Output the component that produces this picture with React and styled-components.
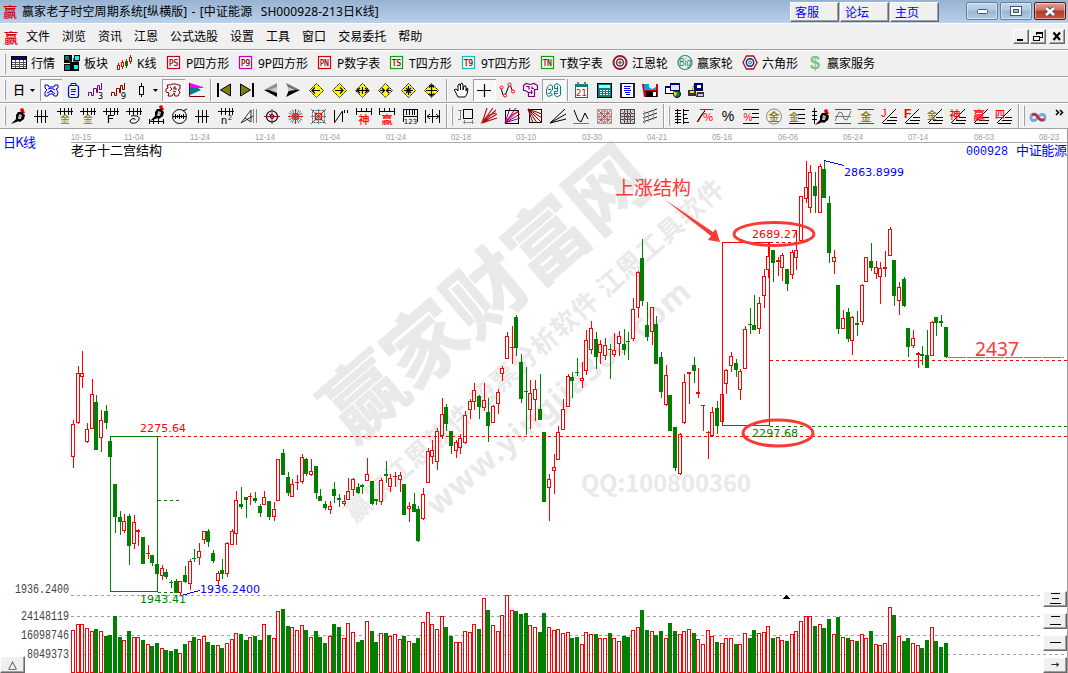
import React from 'react';
import styled, { createGlobalStyle, css } from 'styled-components';

const cjk = '"Noto Sans", "Noto Sans CJK SC", sans-serif';
const OLIVE = '#808000';
const TEAL = '#008080';
const MAROON = '#800000';
const PURPLE = '#800080';

const GlobalStyle = createGlobalStyle`
    * {
        box-sizing: border-box;
    }
    body {
        margin: 0;
        overflow: hidden;
        background: #f0f0f0;
        font-family: ${cjk};
        font-size: 12px;
        color: #000;
    }
`;

const raised = css`
    background: #f0f0f0;
    border: 1px solid;
    border-color: #fff #696969 #696969 #fff;
    box-shadow: inset -1px -1px 0 #a0a0a0;
`;

const Window = styled.div`
    display: flex;
    flex-direction: column;
    width: 1068px;
    height: 673px;
`;

const TitleBar = styled.header`
    display: flex;
    align-items: flex-start;
    height: 23px;
    padding: 0 2px 0 3px;
    background: linear-gradient(#98b3d2, #b9d1ea);
    & > h1 {
        flex: 1;
        margin: 0 0 0 5px;
        font-size: 12px;
        line-height: 23px;
        font-weight: 400;
        letter-spacing: .1px;
        word-spacing: 1px;
        white-space: pre;
    }
`;

const AppMark = styled.span`
    width: 14px;
    line-height: ${(p) => p.$line || 23}px;
    font-family: "Noto Sans CJK SC", sans-serif;
    font-size: 14px;
    font-weight: 500;
    color: #d00010;
`;

const LinkButtons = styled.div`
    display: flex;
    gap: 1px;
    padding-top: 2px;
    margin-right: 27px;
    & > button {
        ${raised}
        width: 49px;
        height: 20px;
        padding: 0 0 0 4px;
        text-align: left;
        font-family: "Noto Sans CJK SC", sans-serif;
        font-size: 12px;
        line-height: 16px;
        color: #00f;
    }
`;

const WindowButtons = styled.div`
    display: flex;
    gap: 2px;
    padding-top: 2px;
`;

const WindowButton = styled.button`
    display: flex;
    align-items: center;
    justify-content: center;
    width: 32px;
    height: 18px;
    padding: 0;
    border: 1px solid ${(p) => (p.$close ? '#4e1c1c' : '#62809f')};
    border-radius: 2px;
    background: ${(p) => (p.$close
        ? 'linear-gradient(#e0a497, #cf7262 45%, #b8371f 50%, #c9583f)'
        : 'linear-gradient(#c1d5ea, #b2c9e2 45%, #9ab6d3 50%, #b1cae5)')};
    box-shadow: inset 0 0 0 1px rgba(255, 255, 255, .45);
`;

const MenuBar = styled.nav`
    display: flex;
    align-items: center;
    height: 27px;
    padding: 0 3px 0 4px;
    border-top: 1px solid #fff;
    border-bottom: 1px solid #a0a0a0;
    & > ul {
        display: flex;
        flex: 1;
        gap: 12px;
        margin: 0;
        padding: 0 0 0 8px;
        list-style: none;
        line-height: 15px;
    }
`;

const MdiButtons = styled.div`
    display: flex;
    gap: 1px;
    & > button {
        ${raised}
        width: 16px;
        height: 15px;
        padding: 0;
        line-height: 0;
    }
    & > button:last-child {
        margin-left: 2px;
    }
`;

const Toolbar = styled.div`
    display: flex;
    align-items: center;
    flex: none;
    height: ${(p) => p.$height || 26}px;
    padding-left: 4px;
    border-top: 1px solid #fff;
    border-bottom: 1px solid #a0a0a0;
`;

const Grip = styled.i`
    flex: none;
    width: 2px;
    height: 20px;
    margin-right: ${(p) => p.$after}px;
    border-left: 1px solid #fff;
    border-right: 1px solid #a0a0a0;
`;

const Divider = styled.i`
    flex: none;
    width: 2px;
    height: ${(p) => (p.$full ? 24 : 22)}px;
    margin: 0 ${(p) => p.$after}px 0 ${(p) => p.$before}px;
    border-left: 1px solid #a0a0a0;
    border-right: 1px solid #fff;
`;

const LabelTool = styled.div`
    display: flex;
    align-items: center;
    flex: none;
    gap: 3px;
    width: ${(p) => p.$width}px;
    white-space: nowrap;
    line-height: 17px;
`;

const Tool = styled.div`
    display: flex;
    align-items: flex-start;
    flex: none;
    width: ${(p) => p.$width || 23}px;
    height: 22px;
    padding-top: 3px;
    padding-left: ${(p) => (p.$tight ? 0 : 3)}px;
    ${(p) => p.$pressed && css`
        background: #f8f8f8;
        box-shadow: inset 1px 1px 0 #a0a0a0, inset -1px -1px 0 #fff;
    `}
`;

const Icon = styled.svg`
    display: block;
    flex: none;
    width: 17px;
    height: 17px;
    overflow: visible;
`;

const ChartArea = styled.main`
    position: relative;
    flex: none;
    height: 544px;
    background: #fff;
    border-right: 1px solid #a0a0a0;
    & > svg {
        display: block;
        overflow: visible;
    }
`;

const CornerButton = styled.button`
    ${raised}
    position: absolute;
    left: 0;
    bottom: 0;
    width: 25px;
    height: 17px;
    padding: 0;
    font-family: "DejaVu Sans", sans-serif;
    font-size: 11px;
    line-height: 12px;
`;

const PaneButtons = styled.div`
    position: absolute;
    right: 0;
    bottom: 0;
    display: flex;
    flex-direction: column;
    gap: 6px;
    & > button {
        ${raised}
        width: 24px;
        height: 16px;
        padding: 0;
        font-family: "DejaVu Sans", sans-serif;
        font-size: 10px;
        line-height: 0;
    }
`;

// stroke helper for the small toolbar drawings
const S = ({ d, c = '#000', w = 1, f = 'none' }) => <path d={d} stroke={c} strokeWidth={w} fill={f} />;
const F = ({ d, c = '#000' }) => <path d={d} fill={c} />;
const T = ({ x = 8, y = 15, s = 10, c = '#000', b = 400, m = 'middle', children }) => (
    <text x={x} y={y} fontSize={s} fill={c} fontWeight={b} textAnchor={m} fontFamily='"Noto Sans CJK SC", sans-serif'>{children}</text>
);

const comb = 'M0 3.500H16M3.500 0V7M7.500 0V7M11.500 0V7M14.500 0V7';
const fan = 'M1 15L12 0M1 15L15 2M1 15L16 6M1 15L16 10M1 15L6 0';
const slant = 'M1 15L15 1M9 9.500H16M6 12.500H16M2 15.500H15';

const Pen = ({ x = 0, y = 0 }) => (
    <g transform={`translate(${x} ${y})`}>
        <F d="M9 1L12 0L14 5L10 5Z" c="#e00000" />
        <F d="M7 4L11 4L14 7L13 11L9 14L5 12L5 7Z" />
        <F d="M8 6L11 7L10 11L7 11Z" c="#b8b8b8" />
        <F d="M5 11L8 13L0 16Z" />
    </g>
);

const Diamond = ({ arrow }) => (
    <>
        <path d="M8.500 1.500L15.500 8.500L8.500 15.500L1.500 8.500Z" fill="#ff0" stroke="#000" strokeDasharray="1.500 .6" />
        <S d={arrow} w="1.200" />
    </>
);

const Plate = ({ text, border }) => (
    <>
        <rect x="1.500" y="1.500" width="12" height="12" fill="#fff8f8" stroke={border} strokeWidth="1.200" />
        <text x="7.500" y="11" fontSize="8" textLength="9" lengthAdjust="spacingAndGlyphs" fontFamily="DejaVu Sans, sans-serif" textAnchor="middle" fill={MAROON} stroke={MAROON} strokeWidth=".25">{text}</text>
    </>
);

const Grid = ({ c, r }) => (
    <>
        <S d="M1.500 1.500H15.500V15.500H1.500ZM1 5.500H16M1 8.500H16M1 11.500H16M5.500 1V16M8.500 1V16M11.500 1V16" c={c} />
        <S d="M2 2L15 15M15 2L2 15M8.500 2L2 8.500L8.500 15L15 8.500Z" c={r} />
    </>
);

const icons = {
    quote: <><rect x=".5" y="1.500" width="15" height="12" fill="#fff" stroke="#000" /><F d="M1 2H15V5H1Z" c="#000080" /><S d="M1 7.500H15M1 9.500H15M1 11.500H15M4.500 5V13M8.500 5V13M12.500 5V13" c="#555" /></>,
    blocks: (
        <>
            <F d="M0 0H8V8H0ZM6 7H15V16H6Z" />
            <F d="M1 1H5V5H1ZM2 10H7V15H2ZM9 3H15V7H9Z" c={TEAL} />
            <rect x="10.500" y=".5" width="5" height="5" fill="#00ffff" stroke="#000" />
            <rect x=".5" y="9.500" width="6" height="6" fill={TEAL} stroke="#000" />
            <rect x="9.500" y="9.500" width="5" height="5" fill="#00ffff" stroke="#000" />
            <S d="M2 2L7 7M5 2L2 5" c={TEAL} />
        </>
    ),
    kline: <><S d="M1.500 8V15M5.500 5V14M13.500 0V9" c="red" /><S d="M9.500 4V13" c="green" /><rect x=".5" y="10.500" width="2" height="4" fill="#fff" stroke="red" /><rect x="4.500" y="7.500" width="2" height="4" fill="#fff" stroke="red" /><rect x="8.500" y="6.500" width="2" height="4" fill="green" stroke="green" /><rect x="12.500" y="2.500" width="2" height="4" fill="#fff" stroke="red" /></>,
    ps: <Plate text="PS" border="#c00020" />,
    p9: <Plate text="P9" border="#c000c0" />,
    pn: <Plate text="PN" border="#d00000" />,
    ts: <Plate text="TS" border="#00a800" />,
    t9: <Plate text="T9" border="#00c0c0" />,
    tn: <Plate text="TN" border="#00a800" />,
    target: <><circle cx="8" cy="7.500" r="6.500" fill="#fff" stroke="#8c1c34" strokeWidth="2" /><circle cx="8" cy="7.500" r="3.500" fill="none" stroke="#7c2638" strokeWidth="1.500" /><circle cx="8" cy="7.500" r="1.500" fill="#2a9a50" /><S d="M8 3V12M3.500 7.500H12.500" c="#6a6a6a" w=".6" /></>,
    big: <><circle cx="8" cy="7.500" r="7" fill="#e4f3f0" stroke="#477792" strokeWidth="1.200" /><text x="8" y="11" fontSize="10" textAnchor="middle" textLength="12" lengthAdjust="spacingAndGlyphs" fill="#198045" fontFamily="Liberation Sans">Big</text></>,
    hex: <><S d="M1 7.500L4.500 1H11.500L15 7.500L11.500 14H4.500Z" c="#b01020" w="1.400" f="#fff" /><circle cx="8" cy="7.500" r="3.700" fill="none" stroke="#1620a0" strokeWidth="1.500" /><circle cx="8" cy="7.500" r="1.500" fill="none" stroke="#15803a" /></>,
    dollar: <text x="8" y="14" fontSize="18" fontWeight="700" textAnchor="middle" fill="#7cc384" fontFamily="Liberation Sans">$</text>,

    day: <T x={11} y={13} s={12} b={500}>日</T>,
    caret: <F d="M0 7H5L2.500 10Z" />,
    storm: <><S d="M2 3H5L6 5H11L12 3H15V6L13 7L15 10L14 14H11L10 12H6L5 14H2V10L4 8L2 6Z" c="#0000e0" /><S d="M5 7L8 6L12 8M4 11L8 9L12 12M7 8L10 10" c="#0000e0" /></>,
    clip: <><rect x="3.500" y="3.500" width="10" height="12" rx="2" fill="none" stroke="#00f" strokeWidth="1.200" /><S d="M6 3.500V1.500H11V3.500M6 7.500H11M6 9.500H11M6 12.500H10" c="#00f" /></>,
    wave3: <><S d="M.5 14V10.500H3.500V13.500H5.500V6.500H8.500V10.500H9.500V3.500H11.500V7.500H13.500V1" c={PURPLE} /><text x="12.500" y="16.500" fontSize="8.500" textAnchor="middle" fontFamily="DejaVu Sans">3</text></>,
    wave9: <><S d="M.5 14V10.500H3.500V13.500H5.500V6.500H8.500V10.500H9.500V3.500H11.500V7.500H13.500V1" c={MAROON} /><text x="12.500" y="16.500" fontSize="8.500" textAnchor="middle" fontFamily="DejaVu Sans">9</text></>,
    candle: <><S d="M7.500 1V15" /><rect x="5.500" y="4.500" width="4" height="8" fill="#f0f0f0" stroke="#000" /></>,
    puzzle: <><S d="M2 3H5L7 2H11L13 3H15V7L13 8L15 10L13 14H10L9 11L7 14H3L4 11L1 10V7L3 6Z" c={MAROON} /><S d="M5 5L7 7L5 9M10 4V7H12M8 9L11 10M9 5V8" c={MAROON} /></>,
    flag: <><S d="M1.500 1V14.500H17" c={MAROON} /><F d="M2 1L15 5V6H2Z" c="#f0f" /><F d="M2 6H10L13 8L2 13Z" c={TEAL} /></>,
    first: <><F d="M1 1H3V15H1Z" /><S d="M14.500 2V14L4.500 8Z" f={OLIVE} /></>,
    last: <><F d="M13 1H15V15H13Z" /><S d="M1.500 2V14L11.500 8Z" f={OLIVE} /></>,
    prev: <><F d="M2 8L15 1V8Z" c="#909090" /><F d="M2 8H15V15Z" /><F d="M7 8L15 5V11Z" c="#c8c8c8" /></>,
    next: <><F d="M15 8L1 1L4 8Z" c="#707070" /><F d="M15 8L1 15L4 8Z" /><F d="M3 5L10 8L4 9Z" c="#c8c8c8" /></>,
    dLeft: <Diamond arrow="M4 8.500H12M7 5.500L4 8.500L7 11.500" />,
    dRight: <Diamond arrow="M4 8.500H12M9 5.500L12 8.500L9 11.500" />,
    dOut: <Diamond arrow="M3 8.500H14M6 6L3 8.500L6 11M11 6L14 8.500L11 11M8.500 5V12" />,
    dIn: <Diamond arrow="M3 8.500H7M5 6L7.500 8.500L5 11M14 8.500H9M12 6L9.500 8.500L12 11" />,
    dAll: <Diamond arrow="M4 8.500H13M8.500 4V13M6 6L11 11M11 6L6 11" />,
    dUp: <Diamond arrow="M3 8.500H14M8.500 3V14M6 5.500L8.500 3L11 5.500M6 11.500L8.500 14L11 11.500" />,
    hand: <><S d="M5 15L2 9L1 8L3 7L5 9V3L6.500 2L7.500 4V8V2L9 1L10 3V8L11 4L13 4V9L14 6L15 7L14 12L12 15Z" f="#fff" /></>,
    cross: <S d="M1 8.500H15M8.500 2V15" w="1.200" />,
    dots: <><S d="M2 6L4 13L6 14L9 6L11 2L13 8L15 11" /><circle cx="2.500" cy="5.500" r="1.500" fill="#fff" stroke="red" /><circle cx="6" cy="13.500" r="1.500" fill="#fff" stroke="red" /><circle cx="10.500" cy="2.500" r="1.500" fill="#fff" stroke="red" /><circle cx="14" cy="9.500" r="1.500" fill="#fff" stroke="red" /></>,
    brain: <S d="M1.500 3.500L4 1.500L8 2.500L12 1.500L15.500 3.500V7.500H12.500V14.500H6.500V10.500L3 8.500H1.500ZM4 4.500H7V7.500M10 4.500V6.500H12M7 10.500H10.500M9.500 8V12" c={PURPLE} w="1.200" />,
    brain2: <><S d="M2.500 5L5 2.500L7.500 4V8L5 10L7.500 13L3 14.500L1.500 12V8ZM9.500 3L12 1.500L15.500 4V13L12 15L9.500 13V9.500H12.500V6.500H9.500ZM3 7.500H6M10 11.500H13M3 11.500H5M12.500 4V7" c={TEAL} /></>,
    calendar: <><rect x="2.500" y="2.500" width="12" height="13" fill="#fff" stroke="#555" /><F d="M2 2H15V5H2Z" c={TEAL} /><F d="M4 0H6V3H4ZM11 0H13V3H11Z" c="#777" /><text x="8.500" y="13.500" fontSize="8.500" textAnchor="middle" fill="#e00000" fontFamily="DejaVu Sans">21</text></>,
    calc: <><rect x="1.500" y="1.500" width="14" height="14" fill={TEAL} stroke="#000" /><F d="M3 3H14V6H3Z" c="#9ff" /><S d="M4 8.500H14M4 10.500H14M4 12.500H14" c="#fff" /><S d="M6.500 7V14M9.500 7V14M12.500 7V14" c={TEAL} /></>,
    notes: <><rect x="1.500" y="1.500" width="14" height="14" fill="#fff" stroke="#000" /><F d="M14 2H16V16H14ZM1 1H3V16H1Z" c="#223" /><S d="M5 4.500H12M5 6.500H11M5 8.500H12M6 10.500H11M7 12.500H11" c="#00f" /></>,
    floppy: <><F d="M0 2H16V15H2Z" c="#d00000" /><F d="M2 2H14V8H2Z" c="#00a0f0" /><F d="M7 2H14V5L10 7L7 5Z" c="#f0f0f0" /><F d="M4 9H15V15H4Z" /><F d="M11 10H14V14H11Z" c="#fff" /></>,
    screens: <><rect x=".5" y="4.500" width="8" height="7" fill="#fff" stroke="#000" /><rect x="5.500" y="1.500" width="9" height="7" fill="#d8e8ff" stroke="#000080" /><F d="M5 1H15V3H5ZM0 4H5V6H0Z" c="#000080" /><circle cx="12" cy="12" r="3.500" fill="#008070" stroke="#000" /><F d="M8 9L12 11L10 15Z" c="#ffe000" /></>,
    network: <><rect x="6.500" y="1.500" width="8" height="7" fill="#000080" stroke="#000" /><F d="M9 3H13V6H9Z" c="#fff" /><F d="M0 8H8V14H0ZM9 10H16V15H8Z" c="#333" /><F d="M2 9H6V11H2Z" c="#ffe000" /><F d="M10 12H15V14H10Z" c="#ccc" /><S d="M4 8L6 3" c="#888" /></>,

    pen: <Pen />,
    hatch: <S d="M0 8.500H14M3.500 2V15M7.500 2V15M11.500 2V15" />,
    gold1: <><S d={comb} /><T y={15} c={OLIVE}>金</T></>,
    letF: <><S d={comb} /><S d="M5.500 15V7.500H11M5 10.500H10" w="1.200" /></>,
    spiral: <><S d={comb} /><S d="M5 8C12 7 15 9 12 13C10 16 4 16 4 13C5 10 10 10 9 12" /></>,
    penScale: <><Pen x={1} y={-3} /><S d="M0 13.500H15M.5 11V16M4.500 11V16M9.500 11V16M14.500 11V16" /></>,
    ruler: <><circle cx="7.500" cy="8.500" r="7" fill="none" stroke="#000" /><S d="M1 8.500H14M3.500 6V11M5.500 7V10M7.500 6V11M9.500 7V10M11.500 6V11M11 3L15 1" /></>,
    n2: <><S d={comb} /><text x="3" y="16" fontSize="11" fontFamily="Liberation Sans">n</text><text x="10" y="12" fontSize="7" fontFamily="Liberation Sans">2</text></>,
    kite: <><S d="M0 15L10 2V14L4 10M12 8L0 15" w=".8" /><S d="M12.500 1V15M15.500 1V15" c="#888" /></>,
    circleCross: <><circle cx="8" cy="8.500" r="5.500" fill="none" stroke="#000" strokeWidth="1.200" /><S d="M0 8.500H16M8 1V16" c="#802020" /><S d="M5 6L8 8.500H11" c="red" /><circle cx="8" cy="8.500" r="2" fill="none" stroke="#300" /></>,
    web: <><circle cx="8.500" cy="8.500" r="6" fill="none" stroke="#999" strokeDasharray="2 1" /><S d="M1 8.500H16M8.500 1V16" c="red" /><S d="M3 3L14 14M14 3L3 14M5 1.500L12 15.500M12 1.500L5 15.500M1.500 5L15.500 12M1.500 12L15.500 5" c={TEAL} w=".6" /><circle cx="8.500" cy="8.500" r="3" fill="none" stroke="#e03030" strokeWidth="1.500" /></>,
    squareWeb: <><rect x="2.500" y="2.500" width="12" height="12" fill="none" stroke={TEAL} strokeDasharray="2 1" /><rect x="5.500" y="5.500" width="6" height="6" fill="none" stroke="red" strokeWidth="1.400" /><S d="M1 8.500H16M8.500 1V16" c="#777" /><S d="M1 1L16 16M16 1L1 16" c="red" w=".8" /></>,
    nn: <S d="M1.500 2V15M2 14L9.500 3V14M11.500 2V5M14.500 2V5" />,
    shen: <><S d="M0 3.500H16M.5 0V7M5.500 0V4M10.500 0V4M15.500 0V7" /><T y={16} c="red" s={11} b={500}>神</T></>,
    ying: <><S d="M0 3.500H16M.5 0V7M5.500 0V4M10.500 0V4M15.500 0V7" /><T y={16} c="red" s={11} b={500}>赢</T></>,
    ruler123: <><S d="M1.500 1V14M1 1.500H15M15.500 1V14M4.500 2V7M7.500 2V7M10.500 2V7M12.500 2V7M2 8.500H15" /><text x="8.500" y="16" fontSize="7" textAnchor="middle" fontFamily="DejaVu Sans">123</text></>,
    span: <S d="M.5 2V15M7.500 1V15M14.500 2V15M2 8.500H14M5 6L2 8.500L5 11M11 6L14 8.500L11 11" />,

    frame: <><S d="M0 2.500H4M0 11.500H3M2.500 2V12M5 14.500H16M6.500 12V16M14.500 12V16" c="#888" /><rect x="5.500" y="1.500" width="9" height="9" fill="none" stroke="#000" /></>,
    fanRed: <><S d={fan} c="#a01010" w="1.100" /><S d="M0 15.500L6 8L15 5" c="red" /></>,
    fanBox: <><rect x="1.500" y="2.500" width="13" height="13" fill="none" stroke="#000" /><S d={fan} c={PURPLE} /><S d="M1 15L9 6L15 4" c="red" /></>,
    fanDown: <><rect x="2.500" y="1.500" width="12" height="13" fill="none" stroke="#000" /><S d="M1 1L15 15M1 1L15 10M1 1L10 15M1 1L15 6M1 1L6 15" c={MAROON} /></>,
    fanBlack: <S d="M0 15L15 1M0 15L16 6M0 15L16 11" />,
    vee: <><S d="M1 2L5 12L8 14L12 5L15 11" /><S d="M0 15.500H16" c="#777" w="1" /></>,
    gridRed: <Grid c="#999" r="#e04040" />,
    gridGray: <Grid c="#444" r="#a08080" />,
    channels: <><S d="M1 6L15 1M1 10L15 5M1 14L15 9" c="#222" /><S d="M2.500 3V16M6.500 3V14M11.500 2V12" c="#999" /></>,

    ladder: <S d="M3.500 1V16M9.500 1V16M1 2.500H7M9 2.500H15M1 5.500H7M9 6.500H13M1 8.500H7M9 10.500H14M1 11.500H7M1 14.500H7M9 14.500H15" />,
    fraction: <><S d="M3 1.500H16M1 14L8 2" c="red" /><S d="M0 14L5 6L8 3" /><T x={11} y={13} s={11} c="red">%</T></>,
    percent: <text x="8" y="13" fontSize="14" textAnchor="middle" fontFamily="Liberation Sans">%</text>,
    percentLines: <><S d="M0 1.500H16M9 5.500H16M9 9.500H16M0 15.500H16" /><text x="5" y="13" fontSize="10" textAnchor="middle" fill="red" fontFamily="Liberation Sans">%</text></>,
    goldRound: <><circle cx="8" cy="8.500" r="7.500" fill="none" stroke="#888" /><T y={12.500} s={11} b={500} c={OLIVE}>金</T></>,
    goldLines: <><S d="M0 1.500H16M9 6.500H16M9 10.500H16M0 15.500H16" /><T x={5} y={13} b={500} c={OLIVE}>金</T></>,
    penAxis: <><S d="M2.500 0V16M0 3.500H5M0 7.500H5M0 11.500H5" /><Pen x={3} y={1} /></>,
    sine: <><S d="M0 1.500H16M0 15.500H16" c="red" /><S d="M0 13L4 4L7 5L9 11L12 12L16 3M0 8.500H16" c="#777" /></>,
    goldBetween: <><S d="M0 1.500H16M0 15.500H16" c="red" /><T y={13} c={OLIVE} s={11} b={500}>金</T></>,
    slantJ: <><S d={slant} /><text x="0" y="9" fontSize="11" fill="red" fontFamily="Liberation Sans">J</text></>,
    slantF: <><S d={slant} /><text x="0" y="10" fontSize="12" fill="red" fontWeight="700" fontFamily="Liberation Sans">F</text></>,
    slantGold: <><S d={slant} /><T x={5} y={11} b={500} c={OLIVE}>金</T></>,
    slantShen: <><S d={slant} /><T x={5} y={11} s={11} b={500} c="red">神</T></>,
    slantYing: <><S d={slant} /><T x={6} y={12} s={12} b={500} c="red">赢</T></>,
    slantFour: <><S d={slant} /><T x={4} y={10} b={500} c="red">四</T></>,
    infinity: <><path d="M8 9C5 4 1 6 1 9.500C1 13 5 14 8 9.500C11 5 15 6 15 9.500C15 13 11 14 8 9" fill="none" stroke="#73a9df" strokeWidth="2.800" /><path d="M2 7C5 5 7 8 8 9.500C10 12 12 13 14 11" fill="none" stroke="#d32030" strokeWidth="2.500" /></>,
    more: <S d="M6 2L8.500 4.500L6 7M10 2L12.500 4.500L10 7" w="1.600" />,
};

const menus = ['文件', '浏览', '资讯', '江恩', '公式选股', '设置', '工具', '窗口', '交易委托', '帮助'];

const labelTools = [
    ['quote', '行情', 53], ['blocks', '板块', 53], ['kline', 'K线', 49], ['ps', 'P四方形', 72],
    ['p9', '9P四方形', 79], ['pn', 'P数字表', 72], ['ts', 'T四方形', 72], ['t9', '9T四方形', 79],
    ['tn', 'T数字表', 72], ['target', '江恩轮', 65], ['big', '赢家轮', 65], ['hex', '六角形', 65], ['dollar', '赢家服务', 80],
];

const navTools = ['first', 'last', 'prev', 'next', 'dLeft', 'dRight', 'dOut', 'dIn', 'dAll', 'dUp'];
const viewTools = ['hand', 'cross', 'dots', 'brain', 'brain2'];
const appTools = ['calendar', 'calc', 'notes', 'floppy', 'screens', 'network'];
const drawTools = [
    ['pen', 'hatch', 'gold1', 'gold1', 'letF', 'spiral', 'penScale', 'ruler', 'hatch', 'n2', 'kite', 'circleCross', 'web', 'squareWeb', 'nn', 'shen', 'ying', 'ruler123', 'span'],
    ['frame', 'fanRed', 'fanBox', 'fanDown', 'fanBlack', 'vee', 'gridRed', 'gridGray', 'channels'],
    ['ladder', 'fraction', 'percent', 'percentLines', 'goldRound', 'goldLines', 'penAxis', 'sine', 'goldBetween', 'slantJ', 'slantF', 'slantGold', 'slantShen', 'slantYing', 'slantFour'],
];

// rising flag, high, body top, body bottom, low, volume top
const R = 1;
const G = 0;
const candles = [
    [R, 420, 424, 457, 468, 630], [R, 366, 373, 423, 424, 624], [R, 351, 373, 377, 388, 624], [R, 423, 429, 442, 443, 628],
    [R, 379, 394, 429, 429, 631], [G, 395, 402, 450, 450, 629], [R, 410, 420, 438, 452, 631], [G, 405, 411, 423, 429, 636],
    [G, 441, 441, 457, 457, 635], [G, 484, 484, 517, 533, 616], [G, 511, 517, 522, 535, 637], [R, 514, 521, 531, 533, 640],
    [G, 514, 516, 546, 565, 631], [R, 515, 522, 544, 549, 637], [R, 529, 530, 532, 546, 637], [G, 537, 537, 564, 564, 640],
    [R, 545, 553, 554, 559, 644], [G, 555, 555, 563, 566, 646], [G, 564, 564, 574, 574, 643], [R, 565, 568, 576, 580, 648],
    [G, 569, 572, 577, 579, 650], [G, 580, 582, 583, 588, 651], [G, 579, 581, 593, 593, 649], [R, 581, 581, 593, 596, 653],
    [G, 566, 575, 582, 583, 644], [R, 559, 561, 584, 590, 641], [G, 549, 558, 559, 562, 637], [R, 543, 551, 558, 565, 639],
    [R, 531, 531, 540, 544, 636], [G, 529, 531, 542, 547, 642], [G, 550, 553, 561, 563, 645], [R, 571, 573, 581, 585, 645],
    [G, 559, 570, 574, 579, 648], [R, 542, 543, 574, 577, 643], [R, 529, 531, 545, 545, 639], [R, 491, 500, 534, 545, 633],
    [G, 487, 504, 507, 509, 634], [G, 497, 497, 500, 518, 640], [R, 493, 496, 497, 505, 637], [G, 492, 498, 501, 503, 636],
    [G, 504, 506, 513, 517, 640], [R, 491, 497, 505, 505, 624], [G, 501, 501, 517, 520, 635], [R, 502, 509, 517, 521, 638],
    [R, 459, 459, 501, 501, 611], [G, 449, 453, 475, 475, 609], [G, 472, 477, 493, 496, 626], [R, 479, 484, 497, 497, 627],
    [R, 475, 482, 483, 490, 630], [R, 454, 457, 482, 484, 625], [G, 458, 459, 474, 476, 630], [R, 459, 471, 475, 476, 637],
    [G, 466, 466, 493, 499, 631], [G, 489, 496, 501, 501, 637], [G, 501, 504, 508, 510, 643], [R, 501, 506, 510, 514, 636],
    [G, 482, 489, 496, 503, 624], [G, 494, 498, 500, 507, 627], [R, 495, 501, 504, 506, 638], [R, 478, 491, 500, 500, 623],
    [R, 478, 479, 490, 496, 632], [G, 483, 487, 493, 494, 642], [G, 484, 485, 487, 494, 640], [R, 458, 474, 481, 481, 621],
    [G, 481, 481, 504, 505, 631], [G, 499, 499, 501, 505, 642], [R, 478, 480, 502, 505, 633], [G, 461, 474, 476, 483, 633],
    [R, 474, 478, 487, 492, 636], [R, 472, 476, 477, 487, 634], [R, 472, 475, 480, 492, 639], [G, 484, 484, 515, 515, 636],
    [R, 502, 506, 509, 522, 641], [G, 493, 504, 512, 512, 643], [G, 506, 509, 541, 542, 638], [R, 488, 494, 519, 520, 622],
    [R, 448, 451, 483, 483, 612], [R, 440, 450, 457, 464, 624], [R, 428, 431, 462, 470, 629], [R, 398, 414, 436, 439, 616],
    [G, 404, 407, 424, 431, 627], [G, 431, 431, 446, 454, 636], [R, 440, 442, 451, 458, 642], [R, 434, 438, 448, 454, 642],
    [R, 411, 415, 443, 444, 631], [R, 399, 401, 410, 419, 632], [R, 383, 390, 402, 410, 624], [G, 395, 396, 407, 419, 629],
    [R, 383, 400, 408, 411, 598], [G, 398, 412, 426, 442, 610], [R, 405, 406, 423, 423, 625], [R, 389, 392, 404, 414, 631],
    [R, 366, 368, 374, 381, 615], [R, 332, 336, 359, 359, 595], [R, 326, 347, 348, 364, 610], [G, 315, 317, 348, 356, 611],
    [G, 354, 362, 399, 403, 614], [G, 367, 391, 392, 435, 613], [R, 380, 393, 410, 429, 625], [R, 380, 389, 400, 421, 627],
    [G, 374, 409, 420, 420, 632], [G, 432, 432, 502, 502, 613], [R, 474, 479, 488, 521, 627], [R, 454, 467, 471, 494, 630],
    [R, 426, 432, 460, 460, 629], [R, 399, 409, 430, 430, 633], [R, 374, 376, 407, 407, 632], [G, 372, 377, 381, 398, 638],
    [G, 358, 372, 373, 376, 637], [R, 362, 378, 381, 388, 644], [R, 330, 340, 371, 375, 632], [R, 321, 328, 350, 354, 634],
    [G, 332, 339, 357, 369, 634], [R, 340, 344, 353, 364, 638], [R, 338, 345, 356, 360, 638], [G, 344, 349, 350, 379, 633],
    [R, 333, 350, 355, 357, 638], [R, 331, 336, 344, 356, 641], [G, 329, 344, 350, 355, 636], [G, 332, 341, 342, 360, 637],
    [R, 298, 309, 339, 341, 630], [R, 271, 272, 308, 318, 627], [G, 239, 258, 301, 306, 610], [G, 302, 325, 337, 341, 630],
    [R, 307, 307, 332, 345, 631], [G, 316, 324, 364, 364, 635], [G, 352, 357, 392, 398, 631], [R, 365, 375, 405, 406, 638],
    [G, 395, 395, 431, 431, 623], [G, 427, 427, 468, 471, 631], [R, 433, 434, 474, 475, 634], [R, 374, 382, 423, 424, 631],
    [R, 372, 372, 374, 404, 629], [G, 357, 365, 371, 383, 633], [R, 368, 392, 394, 398, 639], [R, 405, 405, 406, 431, 644],
    [R, 431, 432, 433, 459, 630], [R, 407, 412, 436, 437, 636], [G, 401, 408, 426, 434, 642], [R, 394, 394, 422, 422, 643],
    [R, 369, 370, 384, 394, 638], [R, 352, 356, 366, 372, 638], [G, 359, 363, 370, 377, 644], [R, 369, 371, 390, 400, 644],
    [R, 326, 329, 369, 369, 633], [G, 308, 324, 325, 334, 638], [G, 295, 325, 330, 330, 630], [R, 297, 303, 329, 334, 633],
    [R, 269, 276, 296, 308, 632], [R, 243, 256, 270, 278, 626], [G, 250, 250, 263, 282, 638], [R, 257, 260, 262, 276, 637],
    [R, 253, 255, 268, 281, 640], [G, 269, 269, 284, 291, 641], [R, 250, 252, 275, 279, 634], [R, 231, 250, 258, 270, 631],
    [R, 196, 196, 241, 241, 621], [R, 161, 187, 199, 203, 616], [R, 165, 172, 208, 213, 616], [G, 172, 186, 196, 213, 626],
    [R, 164, 166, 213, 213, 624], [G, 160, 169, 198, 198, 628], [G, 196, 203, 253, 263, 619], [R, 250, 257, 262, 274, 634],
    [G, 285, 285, 329, 334, 617], [R, 310, 318, 329, 329, 637], [G, 308, 312, 339, 342, 638], [R, 316, 317, 341, 355, 640],
    [G, 311, 323, 325, 336, 641], [R, 284, 285, 322, 325, 634], [R, 257, 257, 282, 282, 638], [G, 243, 261, 268, 271, 631],
    [R, 261, 267, 274, 279, 644], [R, 262, 268, 277, 304, 645], [R, 251, 267, 269, 277, 643], [R, 227, 229, 256, 256, 607],
    [G, 260, 260, 296, 306, 615], [R, 282, 287, 301, 315, 636], [G, 277, 279, 306, 307, 641], [G, 328, 328, 347, 357, 638],
    [R, 330, 338, 346, 348, 643], [R, 352, 353, 355, 368, 645], [G, 346, 354, 356, 365, 648], [G, 330, 355, 368, 368, 640],
    [R, 321, 322, 356, 356, 627], [G, 317, 317, 323, 336, 641], [G, 315, 321, 323, 327, 647], [G, 327, 327, 357, 358, 643],
];

const dates = [
    ['10-15', 71], ['11-04', 124], ['11-24', 190], ['12-14', 255], ['01-04', 320], ['01-24', 386], ['02-18', 451], ['03-10', 516],
    ['03-30', 582], ['04-21', 647], ['05-16', 712], ['06-06', 778], ['06-24', 843], ['07-14', 908], ['08-03', 974], ['08-23', 1039],
];

const ToolIcon = ({ name }) => (
    <Icon viewBox="0 0 17 17">{icons[name]}</Icon>
);

const Bar = ({ x, top, bottom, rising }) => {
    const h = bottom - top;
    if (!rising || h < 3) {
        return <rect x={x - 2} y={top} width="4" height={h} fill={rising ? 'red' : 'green'} />;
    }
    return <rect x={x - 1.5} y={top + 0.5} width="3" height={h - 1} fill="#fff" stroke="red" />;
};

const Candle = ({ index, data }) => {
    const [rising, high, top, bottom, low, volume] = data;
    const x = Math.round(73 + (index * 14) / 3);
    return (
        <g>
            <rect x={x} y={high} width="1" height={low - high} fill={rising ? 'red' : 'green'} />
            <Bar x={x} top={top} bottom={bottom} rising={rising} />
            <Bar x={x} top={volume} bottom={673} rising={rising} />
        </g>
    );
};

const Price = ({ x, y, w, c, children }) => (
    <text x={x} y={y} textLength={w} fontSize="11" fill={c} fontFamily="DejaVu Sans, sans-serif">{children}</text>
);

const AxisLabel = ({ y, children }) => (
    <text x={69 - children.length * 6} y={y} textLength={children.length * 6} lengthAdjust="spacingAndGlyphs" fontSize="12" fill="#404040" fontFamily="Liberation Mono, monospace">{children}</text>
);

const Chart = () => (
    <svg width="1067" height="544" viewBox="0 129 1067 544">
        <g fill="#e9e9e9" fontWeight="700" textAnchor="middle" fontFamily='"Noto Sans CJK SC", sans-serif'>
            <text transform="translate(485 292) rotate(-40.500)" y="30" fontSize="80" stroke="#e9e9e9" strokeWidth="1">赢家财富网</text>
            <text transform="translate(534 350) rotate(-41.800)" y="10" fontSize="26" textLength="498">赢家江恩软件 股票分析软件 江恩工具软件</text>
            <text transform="translate(559 399) rotate(-41)" y="9" fontSize="31" textLength="338" fontFamily="Noto Sans, sans-serif">www.yingjia360.com</text>
            <text x="666" y="492" fontSize="24" textLength="170" lengthAdjust="spacingAndGlyphs">QQ:100800360</text>
        </g>

        <g shapeRendering="crispEdges" fill="none">
            <path d="M71 142.500H1067" stroke="#a9a9a9" />
            <path d="M71 595.500H1041M71 616.500H1041M71 635.500H1041M71 654.500H1067" stroke="#a0a0a0" strokeDasharray="3 3" />
            {candles.map((data, i) => <Candle key={i} index={i} data={data} />)}
            <path d="M110.500 436.500H157.500V591.500H110.500Z" stroke="green" />
            <path d="M158 500.500H180M158 592.500H181M770 426.500H1067" stroke="green" strokeDasharray="3 3" />
            <path d="M158 436.500H1067M770 360.500H1067M770 242.500H797" stroke="red" strokeDasharray="3 3" />
            <path d="M722.500 242.500H769.500V425.500H722.500Z" stroke="red" />
            <path d="M948 357.500H1064" stroke="#808080" strokeDasharray="18 1" />
            <path d="M824 160.500L844 165.500M181 595.500L200 590.500" stroke="#00f" />
            <path d="M782 599L786.500 595L791 599Z" fill="#000" />
        </g>

        {dates.map(([text, x]) => (
            <text key={text} x={x} y="140" fontSize="9.500" textLength="20" lengthAdjust="spacingAndGlyphs" fill="#a0a0a0" fontFamily="Liberation Sans, sans-serif">{text}</text>
        ))}
        <g fontFamily='"Noto Sans CJK SC", sans-serif' fontSize="13">
            <text x="3" y="147" fill="#00f" textLength="33">日K线</text>
            <text x="71" y="155" textLength="91">老子十二宫结构</text>
            <text x="966" y="155" fill="#00f" fontSize="13" textLength="42" lengthAdjust="spacingAndGlyphs" fontFamily="Liberation Mono, monospace">000928</text>
            <text x="1016" y="155" fill="#00f" textLength="51">中证能源</text>
        </g>
        <AxisLabel y={593}>1936.2400</AxisLabel>
        <AxisLabel y={620}>24148119</AxisLabel>
        <AxisLabel y={639}>16098746</AxisLabel>
        <AxisLabel y={658}>8049373</AxisLabel>

        <Price x={140} y={432} w={46} c="red">2275.64</Price>
        <Price x={140} y={603} w={46} c="green">1943.41</Price>
        <Price x={200} y={593} w={60} c="#00f">1936.2400</Price>
        <Price x={844} y={176} w={60} c="#00f">2863.8999</Price>
        <Price x={752} y={238} w={46} c="red">2689.27</Price>
        <Price x={752} y={437} w={46} c="green">2297.68</Price>

        <g fill="#fb3a36">
            <text x="615" y="195" fontSize="19" textLength="76" fontFamily='"Noto Sans CJK SC", sans-serif'>上涨结构</text>
            <text x="975" y="356" fontSize="20" textLength="44" lengthAdjust="spacingAndGlyphs" fontFamily="Noto Sans, sans-serif">2437</text>
            <path d="M664 199L713 232L716 229L720 242L708 240L711 236Z" />
        </g>
        <g fill="none" stroke="#fb3a36" strokeWidth="3">
            <ellipse cx="774" cy="234" rx="40" ry="11.500" />
            <ellipse cx="778" cy="433" rx="35" ry="13" />
        </g>
    </svg>
);

const App = () => {
    return (
        <Window>
            <GlobalStyle />

            <TitleBar>
                <AppMark>赢</AppMark>
                <h1>赢家老子时空周期系统[纵横版] - [中证能源  SH000928-213日K线]</h1>
                <LinkButtons>
                    <button>客服</button>
                    <button>论坛</button>
                    <button>主页</button>
                </LinkButtons>
                <WindowButtons>
                    <WindowButton>
                        <svg width="13" height="7"><rect x="1.500" y="1.500" width="10" height="4" rx="1" fill="#fff" stroke="#44566c" /></svg>
                    </WindowButton>
                    <WindowButton>
                        <svg width="12" height="10"><rect x="2" y="2" width="8" height="6" fill="none" stroke="#44566c" strokeWidth="4" /><rect x="2" y="2" width="8" height="6" fill="none" stroke="#fff" strokeWidth="2" /></svg>
                    </WindowButton>
                    <WindowButton $close>
                        <svg width="14" height="11"><path d="M3 2L11 9M11 2L3 9" stroke="#44566c" strokeWidth="4.500" /><path d="M3 2L11 9M11 2L3 9" stroke="#fff" strokeWidth="2.500" /></svg>
                    </WindowButton>
                </WindowButtons>
            </TitleBar>

            <MenuBar>
                <AppMark $line={24}>赢</AppMark>
                <ul>
                    {menus.map((name) => <li key={name}>{name}</li>)}
                </ul>
                <MdiButtons>
                    <button><svg width="12" height="11"><path d="M2 8H8V10H2Z" /></svg></button>
                    <button><svg width="12" height="11" shapeRendering="crispEdges"><path d="M4.500 4V1.500H10.500V6.500H8M4 2H11M1.500 5.500H7.500V9.500H1.500ZM1 5H8" fill="none" stroke="#000" /></svg></button>
                    <button><svg width="12" height="11"><path d="M2.500 1.500L9 9M9 1.500L2.500 9" stroke="#000" strokeWidth="2.200" /></svg></button>
                </MdiButtons>
            </MenuBar>

            <Toolbar $height={27}>
                <Grip $after={5} />
                {labelTools.map(([icon, text, width]) => (
                    <LabelTool key={icon} $width={width}>
                        <ToolIcon name={icon} />
                        {text}
                    </LabelTool>
                ))}
            </Toolbar>

            <Toolbar>
                <Grip $after={2} />
                <Tool $width={22} $tight><ToolIcon name="day" /></Tool>
                <Tool $width={10} $tight><ToolIcon name="caret" /></Tool>
                <Tool $width={22} $pressed><ToolIcon name="storm" /></Tool>
                <Tool><ToolIcon name="clip" /></Tool>
                <Tool><ToolIcon name="wave3" /></Tool>
                <Tool><ToolIcon name="wave9" /></Tool>
                <Tool $width={22}><ToolIcon name="candle" /></Tool>
                <Tool $width={9} $tight><ToolIcon name="caret" /></Tool>
                <Tool $pressed><ToolIcon name="puzzle" /></Tool>
                <Tool><ToolIcon name="flag" /></Tool>
                <Divider $before={2} $after={1} />
                {navTools.map((name) => <Tool key={name}><ToolIcon name={name} /></Tool>)}
                <Divider $before={3} $after={2} />
                {viewTools.map((name) => (
                    <Tool key={name} $pressed={name === 'cross' || name === 'brain2'}><ToolIcon name={name} /></Tool>
                ))}
                <Divider $before={2} $after={1} />
                {appTools.map((name) => <Tool key={name}><ToolIcon name={name} /></Tool>)}
            </Toolbar>

            <Toolbar>
                <Grip $after={2} />
                {drawTools[0].map((name, i) => <Tool key={i}><ToolIcon name={name} /></Tool>)}
                <Divider $full $before={1} $after={3} />
                <Grip $after={2} />
                {drawTools[1].map((name) => <Tool key={name}><ToolIcon name={name} /></Tool>)}
                <Divider $full $before={1} $after={3} />
                <Grip $after={1} />
                {drawTools[2].map((name) => <Tool key={name}><ToolIcon name={name} /></Tool>)}
                <Divider $full $before={2} $after={3} />
                <Grip $after={2} />
                <Tool><ToolIcon name="infinity" /></Tool>
                <Tool $width={17} $tight><ToolIcon name="more" /></Tool>
            </Toolbar>

            <ChartArea>
                <Chart />
                <CornerButton>△</CornerButton>
                <PaneButtons>
                    <button><svg width="14" height="12" shapeRendering="crispEdges"><path d="M3 .5H12M4 5.500H11M2 10.500H13" stroke="#000" /></svg></button>
                    <button><svg width="14" height="12" shapeRendering="crispEdges"><path d="M3 1.500H12M2 9.500H13" stroke="#000" /></svg></button>
                    <button><svg width="14" height="12" shapeRendering="crispEdges"><path d="M2 5.500H13" stroke="#000" /></svg></button>
                    <button>→</button>
                </PaneButtons>
            </ChartArea>
        </Window>
    );
};

export default App;
